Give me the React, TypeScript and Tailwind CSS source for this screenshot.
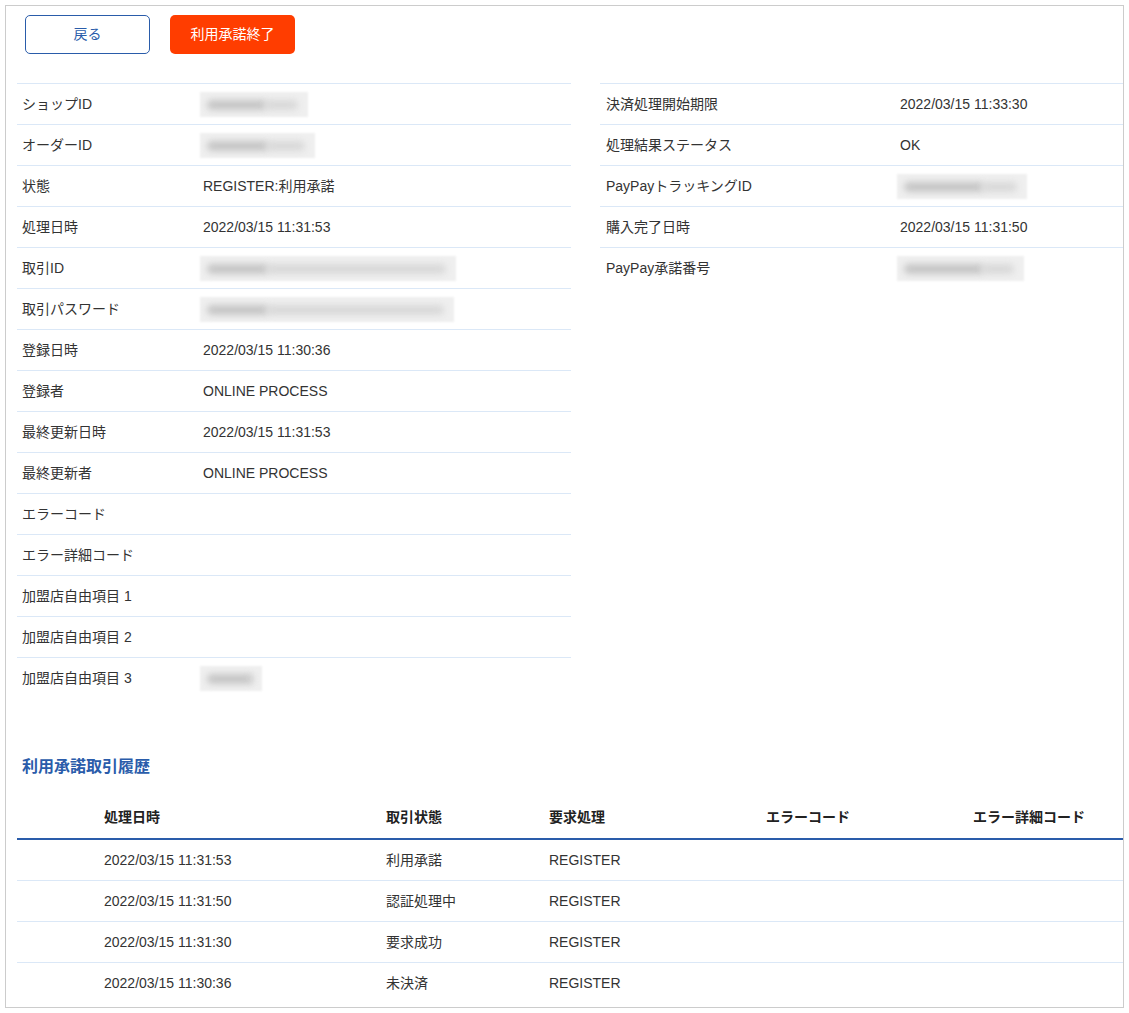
import React from "react";

const font = { fontFamily: '"Liberation Sans", "Noto Sans CJK JP", sans-serif' };

function Blur({ w, dark }: { w: number; dark: number }) {
  return (
    <div className="relative h-[25px] -ml-[3px]" style={{ width: w }}>
      <div className="absolute inset-0 bg-[#efefef] blur-[1px]" />
      <div
        className="absolute left-[7px] top-[8px] h-[10px] bg-[#c6c6c6] blur-[3px] rounded-full"
        style={{ width: dark }}
      />
      <div
        className="absolute top-[8px] h-[10px] bg-[#d9d9d9] blur-[3px] rounded-full"
        style={{ left: dark + 4, width: Math.max(0, w - dark - 14) }}
      />
    </div>
  );
}

type Row = { label: string; value?: string; blur?: [number, number] };

const leftRows: Row[] = [
  { label: "ショップID", blur: [108, 60] },
  { label: "オーダーID", blur: [115, 62] },
  { label: "状態", value: "REGISTER:利用承諾" },
  { label: "処理日時", value: "2022/03/15 11:31:53" },
  { label: "取引ID", blur: [256, 62] },
  { label: "取引パスワード", blur: [254, 62] },
  { label: "登録日時", value: "2022/03/15 11:30:36" },
  { label: "登録者", value: "ONLINE PROCESS" },
  { label: "最終更新日時", value: "2022/03/15 11:31:53" },
  { label: "最終更新者", value: "ONLINE PROCESS" },
  { label: "エラーコード" },
  { label: "エラー詳細コード" },
  { label: "加盟店自由項目 1" },
  { label: "加盟店自由項目 2" },
  { label: "加盟店自由項目 3", blur: [62, 46] },
];

const rightRows: Row[] = [
  { label: "決済処理開始期限", value: "2022/03/15 11:33:30" },
  { label: "処理結果ステータス", value: "OK" },
  { label: "PayPayトラッキングID", blur: [130, 80] },
  { label: "購入完了日時", value: "2022/03/15 11:31:50" },
  { label: "PayPay承諾番号", blur: [127, 80] },
];

function InfoTable({ rows, labelW, pl }: { rows: Row[]; labelW: number; pl: string }) {
  return (
    <div>
      {rows.map((r, i) => (
        <div key={i} className="flex items-center h-[41px] border-t border-[#dbe8f7]">
          <div className={`${pl} shrink-0`} style={{ width: labelW }}>
            {r.label}
          </div>
          <div className="flex items-center">
            {r.blur ? <Blur w={r.blur[0]} dark={r.blur[1]} /> : r.value}
          </div>
        </div>
      ))}
    </div>
  );
}

const history = [
  ["2022/03/15 11:31:53", "利用承諾", "REGISTER"],
  ["2022/03/15 11:31:50", "認証処理中", "REGISTER"],
  ["2022/03/15 11:31:30", "要求成功", "REGISTER"],
  ["2022/03/15 11:30:36", "未決済", "REGISTER"],
];

const cols = "grid grid-cols-[369px_163px_217px_207px_1fr]";

export default function App() {
  return (
    <div className="w-[1129px] h-[1013px] bg-white p-[5px]" style={font}>
      <div className="w-[1119px] h-[1003px] border border-[#cccccc] pl-[11px] pt-[9px] text-[14px] text-[#333333]">
        <div className="flex gap-[20px] pl-[8px]">
          <button className="w-[125px] h-[39px] border border-solid border-[#2a5caa] rounded-[5px] text-[#2a5caa] text-[14px] bg-white">
            戻る
          </button>
          <button className="w-[125px] h-[39px] rounded-[5px] text-white text-[14px] bg-[#ff3d00]">
            利用承諾終了
          </button>
        </div>

        <div className="grid grid-cols-[554px_1fr] gap-[29px] mt-[29px]">
          <InfoTable rows={leftRows} labelW={186} pl="pl-[5px]" />
          <InfoTable rows={rightRows} labelW={300} pl="pl-[6px]" />
        </div>

        <h2 className="mt-[57px] pl-[5px] h-[24px] leading-[24px] text-[16px] font-bold text-[#2a5caa]">
          利用承諾取引履歴
        </h2>

        <div className="mt-[18px]">
          <div className={`${cols} h-[43px] items-center border-b-2 border-[#2a5caa] font-bold text-[#222222]`}>
            <div className="pl-[87px]">処理日時</div>
            <div>取引状態</div>
            <div>要求処理</div>
            <div>エラーコード</div>
            <div>エラー詳細コード</div>
          </div>
          {history.map((h, i) => (
            <div
              key={i}
              className={`${cols} items-center ${
                i < history.length - 1 ? "h-[41px] border-b border-[#dbe8f7]" : "h-[40px]"
              }`}
            >
              <div className="pl-[87px]">{h[0]}</div>
              <div>{h[1]}</div>
              <div>{h[2]}</div>
              <div></div>
              <div></div>
            </div>
          ))}
        </div>
      </div>
    </div>
  );
}
